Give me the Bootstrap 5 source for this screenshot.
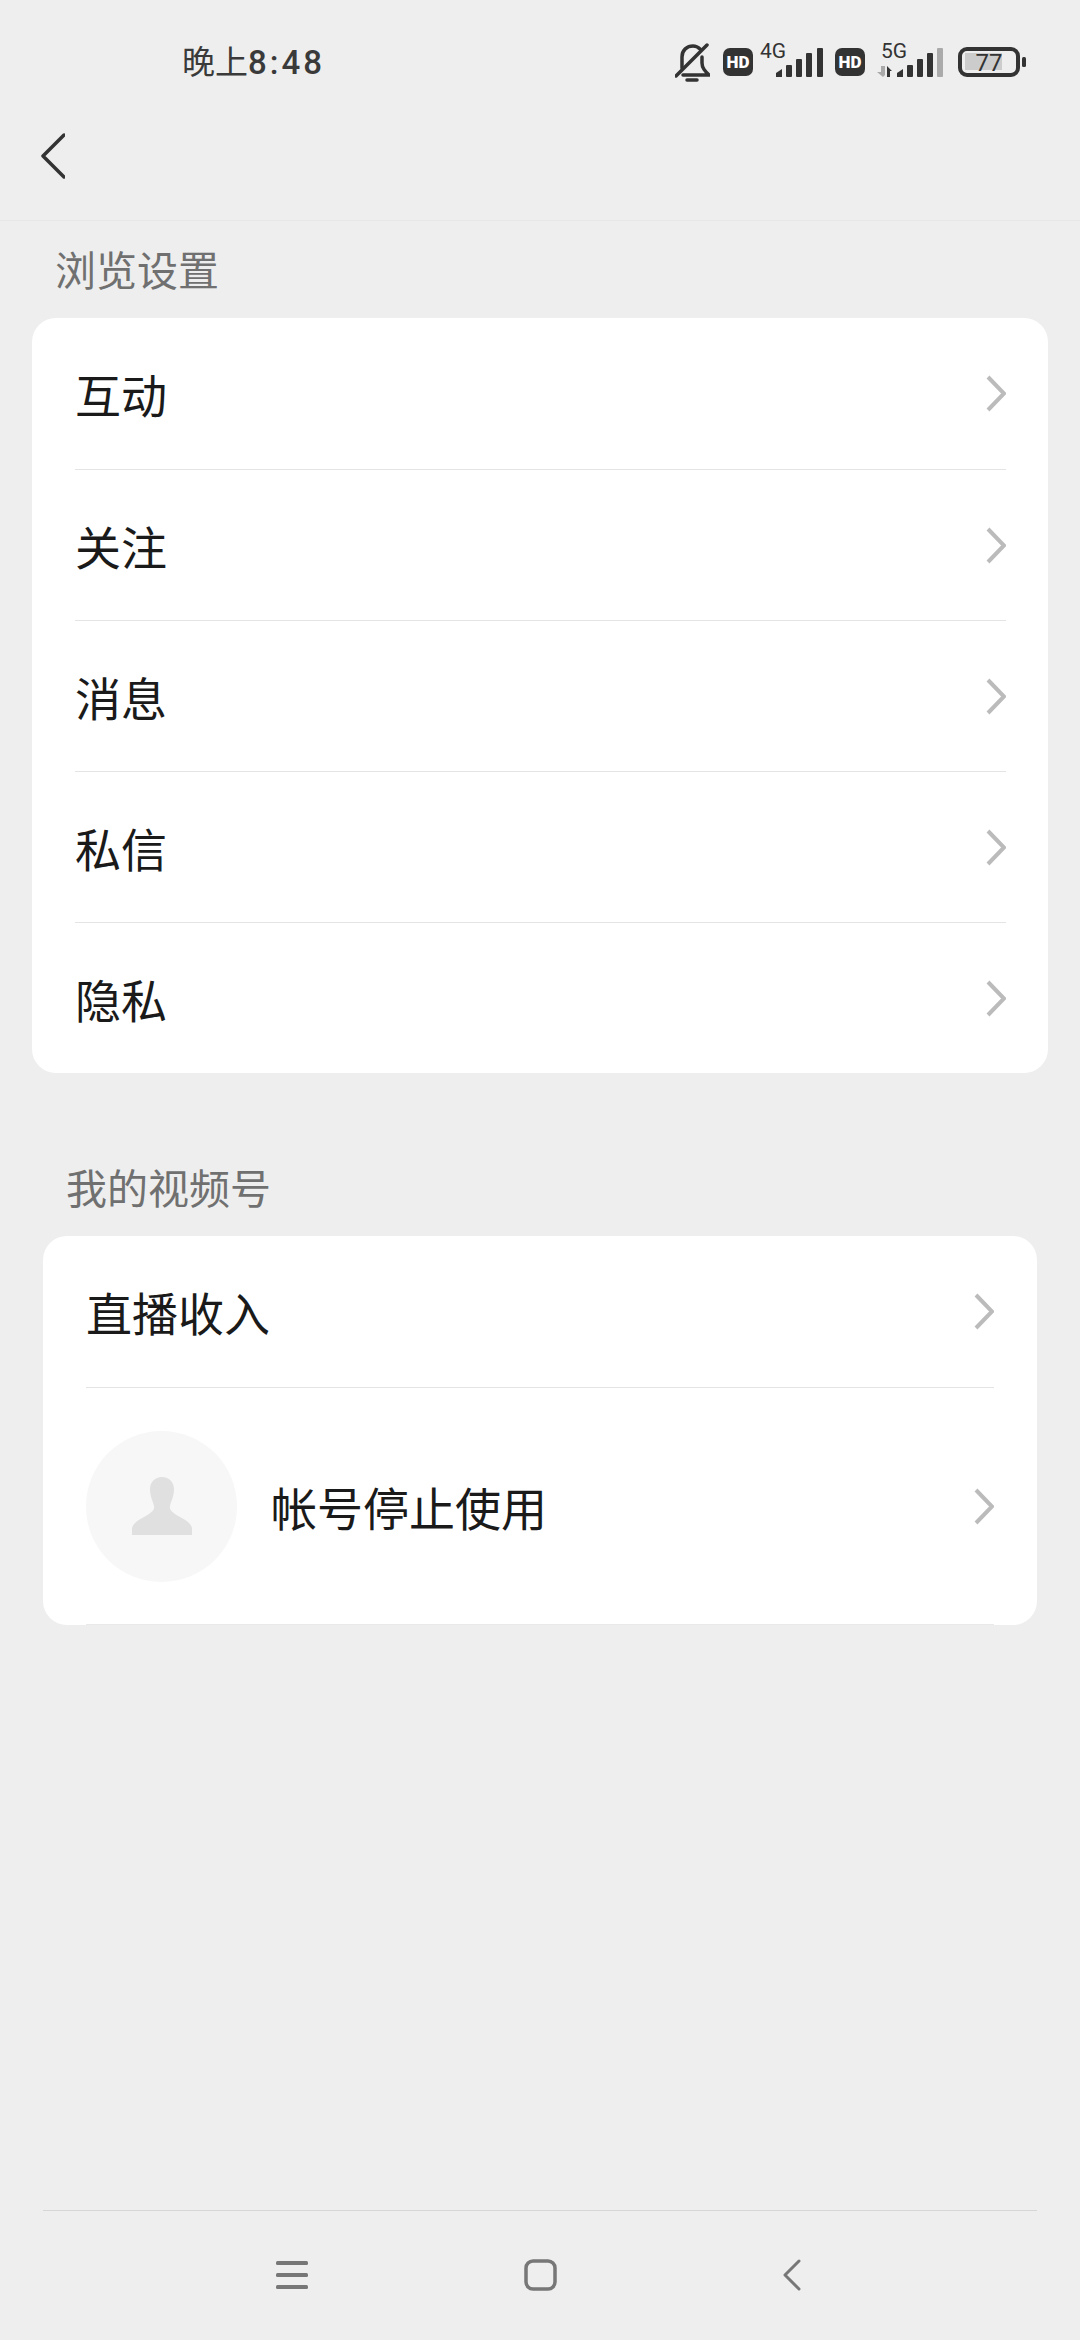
<!DOCTYPE html>
<html lang="zh-CN">
<head>
  <meta charset="UTF-8" />
  <meta name="viewport" content="width=device-width, initial-scale=1.0">
  <title>浏览设置</title>
  <link href="https://cdn.jsdelivr.net/npm/bootstrap@5.3.3/dist/css/bootstrap.min.css" rel="stylesheet">
  <style>
    body {
      background: #eeeeee;
      font-family: "Noto Sans CJK SC", "Liberation Sans", sans-serif;
      color: #1a1a1a;
      min-height: 2340px;
    }
    .stat-bar { height: 84px; padding: 40px 54px 0 182px; font-size: 33px; color: #3a3a3a; }
    .stat-time span { font-family: Roboto, sans-serif; font-weight: 500; letter-spacing: 3px; }
    .stat-bar svg { display: block; }
    .stat-bar text { font-family: Roboto, sans-serif; fill: #333; }
    .gap-a { margin-left: 13px; }
    .gap-b { margin-left: 7px; }
    .gap-c { margin-left: 12px; }
    .gap-d { margin-left: 15px; }
    .top-head { height: 137px; border-bottom: 1px solid #e7e7e7; padding-left: 41px; padding-top: 8px; }
    .sec-title { font-size: 41px; line-height: 58px; color: #707070; }
    .sec-one { padding-left: 55px; margin-top: 18px; margin-bottom: 21px; }
    .sec-two { padding-left: 66px; margin-top: 84px; margin-bottom: 21px; }
    .panel { background: #fff; border-radius: 24px; }
    .panel-one { margin: 0 32px; padding: 0 42px 0 43px; }
    .panel-two { margin: 0 43px; padding: 0 43px; }
    .set-row { height: 151px; font-size: 46px; color: #1a1a1a; text-decoration: none; }
    .set-row + .set-row { border-top: 1px solid #e4e4e4; }
    .set-row-tall { height: 238px; border-bottom: 1px solid #e9e9e9; }
    .avatar-disc { width: 151px; height: 151px; background: #f7f7f7; margin-right: 34px; }
    .foot-nav { margin: 0 43px; border-top: 1px solid #d6d6d6; height: 130px; }
    .foot-icons { width: 744px; padding-top: 48px; }
  </style>
</head>
<body class="d-flex flex-column">

<div class="stat-bar d-flex align-items-center justify-content-between">
  <div class="stat-time">晚上<span>8:48</span></div>
  <div class="d-flex align-items-center">
    <svg width="35" height="39" viewBox="0 0 35 39" fill="none" stroke="#333" stroke-width="3.500" stroke-linecap="round">
      <path d="M7 25V14C7 7 12 3 18 3c3 0 5 1 7 3M27 14v6c0 5 3 8 7 12H8"/>
      <path d="M1 33 32 2"/>
      <path d="M12 37h10"/>
    </svg>
    <svg class="gap-a" width="30" height="28" viewBox="0 0 30 28">
      <rect width="30" height="28" rx="7" fill="#333"/>
      <text x="15" y="20" font-size="17" font-weight="900" text-anchor="middle" style="fill:#fff">HD</text>
    </svg>
    <svg class="gap-b" width="63" height="50" viewBox="0 -6 63 50">
      <text x="0" y="15" font-size="21">4G</text>
      <g fill="#333">
        <path d="M16 34v-4l6-4v8z"/>
        <rect x="26" y="22" width="6" height="12" rx="1"/>
        <rect x="36" y="16" width="6" height="18" rx="1"/>
        <rect x="46" y="10" width="6" height="24" rx="1"/>
        <rect x="57" y="5" width="6" height="29" rx="1"/>
      </g>
    </svg>
    <svg class="gap-c" width="30" height="28" viewBox="0 0 30 28">
      <rect width="30" height="28" rx="7" fill="#333"/>
      <text x="15" y="20" font-size="17" font-weight="900" text-anchor="middle" style="fill:#fff">HD</text>
    </svg>
    <svg class="gap-c" width="66" height="50" viewBox="0 -6 66 50">
      <text x="4" y="15" font-size="21">5G</text>
      <path d="M4 23v6H0l6 5 2-2V23z" fill="#aaa"/>
      <path d="M10 34V23l5 5h-2v6z" fill="#333"/>
      <g fill="#333">
        <path d="M20 34v-4l6-4v8z"/>
        <rect x="30" y="22" width="6" height="12" rx="1"/>
        <rect x="40" y="16" width="6" height="18" rx="1"/>
        <rect x="50" y="10" width="6" height="24" rx="1"/>
      </g>
      <rect x="60" y="5" width="6" height="29" rx="1" fill="#aaa"/>
    </svg>
    <svg class="gap-d" width="68" height="30" viewBox="0 0 68 30">
      <rect x="7" y="6" width="37" height="17" fill="#ccc"/>
      <rect x="2" y="2" width="58" height="26" rx="7" fill="none" stroke="#333" stroke-width="4"/>
      <rect x="64" y="10" width="4" height="10" rx="1.500" fill="#333"/>
      <text x="31" y="24" font-size="24" text-anchor="middle">77</text>
    </svg>
  </div>
</div>

<div class="top-head d-flex align-items-center">
  <svg width="24" height="46" viewBox="0 0 24 46" fill="none" stroke="#333" stroke-width="3.500" stroke-linecap="round" stroke-linejoin="round">
    <path d="M23 2 2 23l21 21"/>
  </svg>
</div>

<div class="sec-title sec-one">浏览设置</div>
<div class="panel panel-one">
  <a class="set-row d-flex align-items-center justify-content-between" href="#">互动
    <svg width="20" height="37" viewBox="0 0 20 37" fill="none" stroke="#bbb" stroke-width="4"><path d="M2 2l16 16.500L2 35"/></svg></a>
  <a class="set-row d-flex align-items-center justify-content-between" href="#">关注
    <svg width="20" height="37" viewBox="0 0 20 37" fill="none" stroke="#bbb" stroke-width="4"><path d="M2 2l16 16.500L2 35"/></svg></a>
  <a class="set-row d-flex align-items-center justify-content-between" href="#">消息
    <svg width="20" height="37" viewBox="0 0 20 37" fill="none" stroke="#bbb" stroke-width="4"><path d="M2 2l16 16.500L2 35"/></svg></a>
  <a class="set-row d-flex align-items-center justify-content-between" href="#">私信
    <svg width="20" height="37" viewBox="0 0 20 37" fill="none" stroke="#bbb" stroke-width="4"><path d="M2 2l16 16.500L2 35"/></svg></a>
  <a class="set-row d-flex align-items-center justify-content-between" href="#">隐私
    <svg width="20" height="37" viewBox="0 0 20 37" fill="none" stroke="#bbb" stroke-width="4"><path d="M2 2l16 16.500L2 35"/></svg></a>
</div>

<div class="sec-title sec-two">我的视频号</div>
<div class="panel panel-two">
  <a class="set-row d-flex align-items-center justify-content-between" href="#">直播收入
    <svg width="20" height="37" viewBox="0 0 20 37" fill="none" stroke="#bbb" stroke-width="4"><path d="M2 2l16 16.500L2 35"/></svg></a>
  <a class="set-row set-row-tall d-flex align-items-center justify-content-between" href="#">
    <span class="d-flex align-items-center">
      <span class="avatar-disc rounded-circle d-flex align-items-center justify-content-center">
        <svg width="60" height="58" viewBox="0 0 60 58" fill="#e0e0e0">
          <path d="M18 12C18 5 23 0 30 0s12 5 12 12c0 8-3 12-4 17-1 4 3 7 10 11 8 4 12 8 12 12v6H0v-6c0-4 4-8 12-12 7-4 11-7 10-11-1-5-4-9-4-17z"/>
        </svg>
      </span>
      帐号停止使用
    </span>
    <svg width="20" height="37" viewBox="0 0 20 37" fill="none" stroke="#bbb" stroke-width="4"><path d="M2 2l16 16.500L2 35"/></svg></a>
</div>

<div class="foot-nav mt-auto">
  <div class="foot-icons row g-0 mx-auto">
    <div class="col-4 d-flex justify-content-center">
      <svg width="32" height="32" viewBox="0 0 32 32" fill="#777">
        <rect y="2" width="32" height="4" rx="1.500"/><rect y="14" width="32" height="4" rx="1.500"/><rect y="26" width="32" height="4" rx="1.500"/>
      </svg>
    </div>
    <div class="col-4 d-flex justify-content-center">
      <svg width="33" height="32" viewBox="0 0 33 32" fill="none" stroke="#777" stroke-width="3.500">
        <rect x="2" y="2" width="29" height="28" rx="7"/>
      </svg>
    </div>
    <div class="col-4 d-flex justify-content-center ps-2">
      <svg width="18" height="32" viewBox="0 0 18 32" fill="none" stroke="#777" stroke-width="3" stroke-linecap="round" stroke-linejoin="round">
        <path d="M16 2 2 16l14 14"/>
      </svg>
    </div>
  </div>
</div>

<script src="https://cdn.jsdelivr.net/npm/bootstrap@5.3.3/dist/js/bootstrap.bundle.min.js"></script>
</body>
</html>
